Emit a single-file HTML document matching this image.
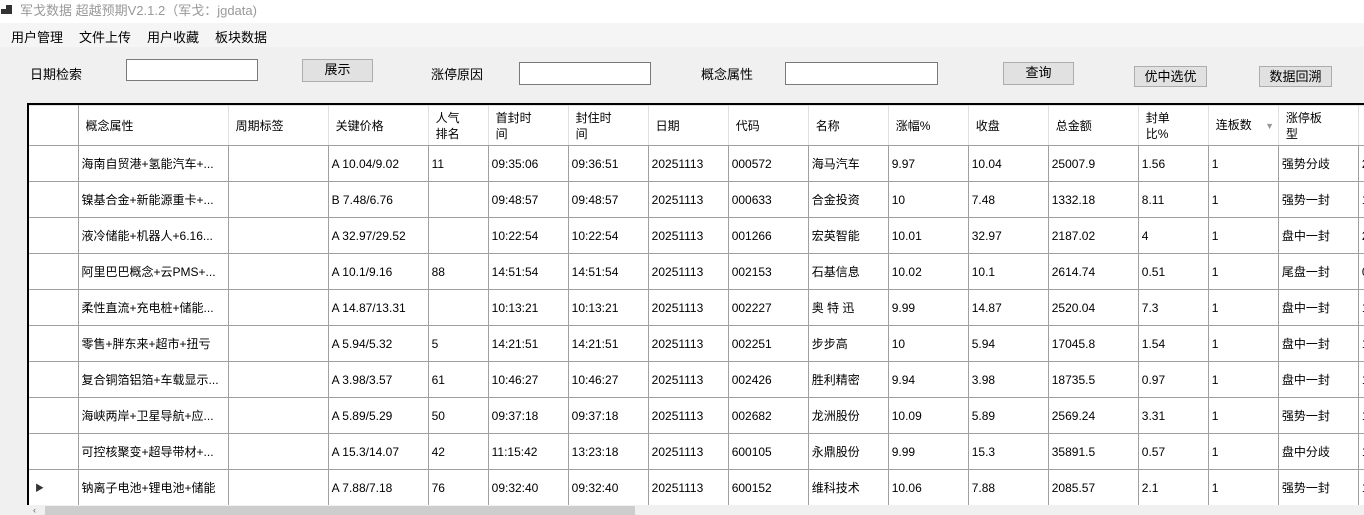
<!DOCTYPE html>
<html><head><meta charset="utf-8"><style>
*{margin:0;padding:0;box-sizing:border-box}
body{width:1364px;height:515px;overflow:hidden;background:#f0f0f0;font-family:"Liberation Sans","Noto Sans CJK SC",sans-serif;font-size:12px;color:#000;position:relative}
.a{position:absolute}
.title{left:0;top:0;width:1364px;height:23px;background:#fff;color:#999;font-size:13px;padding:3px 0 0 20px;line-height:16px}
.menu{left:0;top:23px;width:1364px;height:24px;background:#f5f5f5;font-size:13px}
.menu span{position:absolute;top:4px}
.lbl{font-size:13px}
.inp{background:#fff;border:1px solid #7a7a7a}
.btn{background:#e1e1e1;border:1px solid #adadad;text-align:center;font-size:13px;line-height:19px}
.grid{left:27px;top:103px;width:1337px;height:402px;overflow:hidden;background:#fff;border-left:2px solid #000;border-top:2px solid #000}
table{border-collapse:collapse;table-layout:fixed;width:1420px}
td{border:1px solid #a0a0a0;height:36px;padding:0 3px;white-space:nowrap;overflow:hidden;font-size:12px;vertical-align:middle}
tr.h td{height:40px;border-color:#e0e0e0;border-bottom:1px solid #a0a0a0;padding-left:7px;line-height:16px}
tr td:first-child{border-left:none}
tr.h td:first-child{border-right:1px solid #a0a0a0}
.sb{left:27px;top:505px;width:1337px;height:10px;background:#f0f0f0}
</style></head><body>
<div class="a title">军戈数据 超越预期V2.1.2（军戈：jgdata)</div>
<div class="a" style="left:1px;top:9px;width:5px;height:5px;background:#333"></div>
<div class="a" style="left:6px;top:5px;width:6px;height:9px;background:#333"></div>
<div class="a menu"><span style="left:11px">用户管理</span><span style="left:79px">文件上传</span><span style="left:147px">用户收藏</span><span style="left:215px">板块数据</span></div>
<div class="a lbl" style="left:30px;top:64px">日期检索</div>
<div class="a inp" style="left:126px;top:59px;width:132px;height:22px"></div>
<div class="a btn" style="left:302px;top:59px;width:71px;height:23px">展示</div>
<div class="a lbl" style="left:431px;top:64px">涨停原因</div>
<div class="a inp" style="left:519px;top:62px;width:132px;height:23px"></div>
<div class="a lbl" style="left:701px;top:64px">概念属性</div>
<div class="a inp" style="left:785px;top:62px;width:153px;height:23px"></div>
<div class="a btn" style="left:1003px;top:62px;width:71px;height:23px">查询</div>
<div class="a btn" style="left:1134px;top:66px;width:73px;height:21px">优中选优</div>
<div class="a btn" style="left:1259px;top:66px;width:73px;height:21px">数据回溯</div>
<div class="a grid"><table>
<colgroup><col style="width:49px"><col style="width:150px"><col style="width:100px"><col style="width:100px"><col style="width:60px"><col style="width:80px"><col style="width:80px"><col style="width:80px"><col style="width:80px"><col style="width:80px"><col style="width:80px"><col style="width:80px"><col style="width:90px"><col style="width:70px"><col style="width:70px"><col style="width:80px"><col style="width:90px"></colgroup>
<tr class="h"><td></td><td>概念属性</td><td>周期标签</td><td>关键价格</td><td>人气<br>排名</td><td>首封时<br>间</td><td>封住时<br>间</td><td>日期</td><td>代码</td><td>名称</td><td>涨幅%</td><td>收盘</td><td>总金额</td><td>封单<br>比%</td><td>连板数 <span style="color:#999;font-size:9px;margin-left:10px">▼</span></td><td>涨停板<br>型</td><td></td></tr>
<tr><td></td><td>海南自贸港+氢能汽车+...</td><td></td><td>A 10.04/9.02</td><td>11</td><td>09:35:06</td><td>09:36:51</td><td>20251113</td><td>000572</td><td>海马汽车</td><td>9.97</td><td>10.04</td><td>25007.9</td><td>1.56</td><td>1</td><td>强势分歧</td><td>2</td></tr>
<tr><td></td><td>镍基合金+新能源重卡+...</td><td></td><td>B 7.48/6.76</td><td></td><td>09:48:57</td><td>09:48:57</td><td>20251113</td><td>000633</td><td>合金投资</td><td>10</td><td>7.48</td><td>1332.18</td><td>8.11</td><td>1</td><td>强势一封</td><td>1</td></tr>
<tr><td></td><td>液冷储能+机器人+6.16...</td><td></td><td>A 32.97/29.52</td><td></td><td>10:22:54</td><td>10:22:54</td><td>20251113</td><td>001266</td><td>宏英智能</td><td>10.01</td><td>32.97</td><td>2187.02</td><td>4</td><td>1</td><td>盘中一封</td><td>2</td></tr>
<tr><td></td><td>阿里巴巴概念+云PMS+...</td><td></td><td>A 10.1/9.16</td><td>88</td><td>14:51:54</td><td>14:51:54</td><td>20251113</td><td>002153</td><td>石基信息</td><td>10.02</td><td>10.1</td><td>2614.74</td><td>0.51</td><td>1</td><td>尾盘一封</td><td>0</td></tr>
<tr><td></td><td>柔性直流+充电桩+储能...</td><td></td><td>A 14.87/13.31</td><td></td><td>10:13:21</td><td>10:13:21</td><td>20251113</td><td>002227</td><td>奥 特 迅</td><td>9.99</td><td>14.87</td><td>2520.04</td><td>7.3</td><td>1</td><td>盘中一封</td><td>1</td></tr>
<tr><td></td><td>零售+胖东来+超市+扭亏</td><td></td><td>A 5.94/5.32</td><td>5</td><td>14:21:51</td><td>14:21:51</td><td>20251113</td><td>002251</td><td>步步高</td><td>10</td><td>5.94</td><td>17045.8</td><td>1.54</td><td>1</td><td>盘中一封</td><td>1</td></tr>
<tr><td></td><td>复合铜箔铝箔+车载显示...</td><td></td><td>A 3.98/3.57</td><td>61</td><td>10:46:27</td><td>10:46:27</td><td>20251113</td><td>002426</td><td>胜利精密</td><td>9.94</td><td>3.98</td><td>18735.5</td><td>0.97</td><td>1</td><td>盘中一封</td><td>1</td></tr>
<tr><td></td><td>海峡两岸+卫星导航+应...</td><td></td><td>A 5.89/5.29</td><td>50</td><td>09:37:18</td><td>09:37:18</td><td>20251113</td><td>002682</td><td>龙洲股份</td><td>10.09</td><td>5.89</td><td>2569.24</td><td>3.31</td><td>1</td><td>强势一封</td><td>1</td></tr>
<tr><td></td><td>可控核聚变+超导带材+...</td><td></td><td>A 15.3/14.07</td><td>42</td><td>11:15:42</td><td>13:23:18</td><td>20251113</td><td>600105</td><td>永鼎股份</td><td>9.99</td><td>15.3</td><td>35891.5</td><td>0.57</td><td>1</td><td>盘中分歧</td><td>1</td></tr>
<tr><td style="padding-left:6px;font-size:9px;color:#333">▶</td><td>钠离子电池+锂电池+储能</td><td></td><td>A 7.88/7.18</td><td>76</td><td>09:32:40</td><td>09:32:40</td><td>20251113</td><td>600152</td><td>维科技术</td><td>10.06</td><td>7.88</td><td>2085.57</td><td>2.1</td><td>1</td><td>强势一封</td><td>1</td></tr>
</table></div>
<div class="a sb"><div class="a" style="left:6px;top:0;font-size:9px;color:#666;line-height:10px">‹</div><div class="a" style="left:18px;top:1px;width:590px;height:9px;background:#cdcdcd"></div></div>
</body></html>
